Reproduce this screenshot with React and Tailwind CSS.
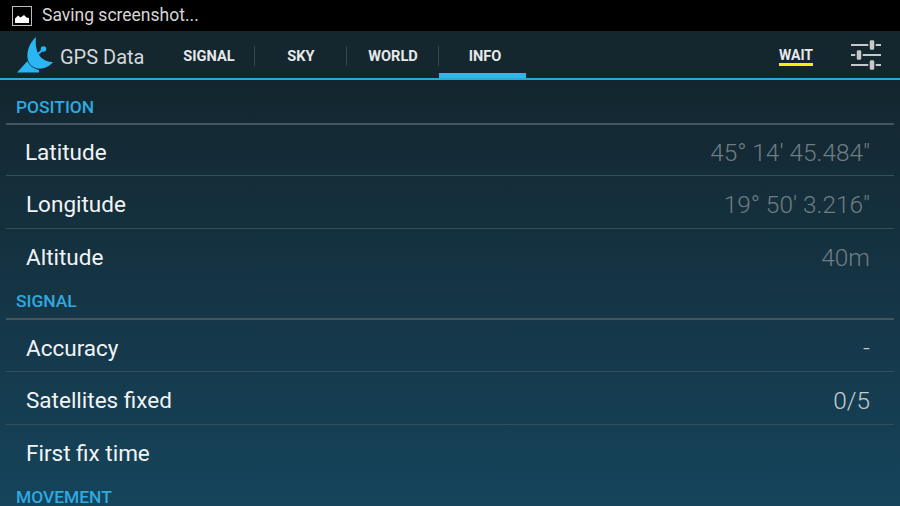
import React from 'react';

const font = { fontFamily: 'Roboto, "Liberation Sans", sans-serif' };

const tabs = ['SIGNAL', 'SKY', 'WORLD'];

const sections = [
  {
    title: 'POSITION',
    top: true,
    rows: [
      { label: 'Latitude', value: '45° 14\' 45.484"', dim: true, height: 'h-[51px]', indent: 'pl-[19px]' },
      { label: 'Longitude', value: '19° 50\' 3.216"', dim: true, height: 'h-[53px]' },
      { label: 'Altitude', value: '40m', dim: true, height: 'h-[52px]' },
    ],
  },
  {
    title: 'SIGNAL',
    rows: [
      { label: 'Accuracy', value: '-', height: 'h-[52px]' },
      { label: 'Satellites fixed', value: '0/5', height: 'h-[53px]' },
      { label: 'First fix time', value: '', height: 'h-[52px]' },
    ],
  },
  { title: 'MOVEMENT', rows: [] },
];

function GalleryIcon() {
  return (
    <svg width="20" height="20" viewBox="0 0 20 20" className="shrink-0">
      <rect x="0.5" y="0.5" width="19" height="19" fill="#000" stroke="#bdbdbd" />
      <path d="M3 17V12.500L6 9.500L8.500 11.500L12 9L14.500 11.500L17 12V17Z" fill="#fff" />
    </svg>
  );
}

function DishLogo() {
  return (
    <svg width="38" height="38" viewBox="0 0 38 38" className="shrink-0">
      <path d="M20 1C13 7 10 17 12 24C14 33 28 37 37 26C28 26 18 20 20 1Z" fill="#29b6f2" />
      <path d="M21 19L27 13.500" stroke="#29b6f2" strokeWidth="2" />
      <circle cx="27.500" cy="13" r="2.800" fill="#29b6f2" />
      <path d="M1 36.500L11.500 25C13 29 17 32.500 23 34L23 36.500Z" fill="#29b6f2" />
    </svg>
  );
}

function SlidersIcon() {
  return (
    <svg width="30" height="32" viewBox="0 0 30 32" className="shrink-0">
      <g fill="#c4c8ca">
        <rect x="0" y="5" width="30" height="2" />
        <rect x="0" y="15" width="30" height="2" />
        <rect x="0" y="25" width="30" height="2" />
      </g>
      <g stroke="#14262e" strokeWidth="1.500" fill="#c4c8ca">
        <rect x="18" y="0.500" width="6" height="11" rx="2" />
        <rect x="5" y="10.500" width="6" height="11" rx="2" />
        <rect x="18" y="20.500" width="6" height="11" rx="2" />
      </g>
    </svg>
  );
}

function Row({ label, value, dim, height, indent, last }) {
  return (
    <div className={`${height} ${indent || 'pl-5'} flex items-center justify-between pr-6 pt-[6px] ${last ? '' : 'border-b border-[#35505c]'}`}>
      <span className="text-[22.5px] text-[#f2f4f4]">{label}</span>
      <span className={`text-[24.4px] font-light ${dim ? 'text-[#6f7d83]' : 'text-[#c6cdd0]'}`}>{value}</span>
    </div>
  );
}

export default function App() {
  return (
    <div style={font} className="w-[900px] h-[506px] overflow-hidden flex flex-col bg-black">
      <div className="h-[31px] shrink-0 flex items-center gap-[10px] pl-3 text-[#d6d6d6] text-[17.5px]">
        <GalleryIcon />
        <span>Saving screenshot...</span>
      </div>

      <div className="h-[49px] shrink-0 flex items-stretch bg-[#14262e] border-b-2 border-[#2ea7d8]">
        <div className="w-[163px] flex items-center pl-4 gap-[6px]">
          <DishLogo />
          <span className="text-[20px] pt-[4px] text-[#d4d8da] whitespace-nowrap">GPS Data</span>
        </div>
        {tabs.map((name) => (
          <div key={name} className="w-[92px] flex items-center justify-center relative pt-[4px] text-[14.6px] font-bold text-[#e6e8e9]">
            {name}
            <span className="absolute right-0 top-[15px] h-[20px] w-px bg-[#37474f]" />
          </div>
        ))}
        <div className="w-[87px] flex items-center justify-center pl-[5px] text-[14.6px] font-bold text-[#e6e8e9] border-b-[5px] border-[#33b5e5] pt-[9px]">
          INFO
        </div>
        <div className="flex-1" />
        <div className="flex items-center">
          <span className="text-[14px] leading-[15px] mt-[5px] font-bold text-[#e6e8e9] border-b-[3px] border-[#f7f10a] mr-[38px]">WAIT</span>
          <div className="mr-[19px]"><SlidersIcon /></div>
        </div>
      </div>

      <div className="flex-1 px-[6px] pt-[6px] bg-gradient-to-b from-[#13262f] to-[#15455d]">
        {sections.map((s) => (
          <div key={s.title}>
            <div className={`h-[39px] flex items-center pl-[10px] text-[17.4px] font-medium text-[#2fa9df] border-b-2 border-[#43565e] ${s.top ? 'pt-[6px]' : 'pt-[4px]'}`}>
              {s.title}
            </div>
            {s.rows.map((r, i) => (
              <Row key={r.label} {...r} last={i === s.rows.length - 1} />
            ))}
          </div>
        ))}
      </div>
    </div>
  );
}
